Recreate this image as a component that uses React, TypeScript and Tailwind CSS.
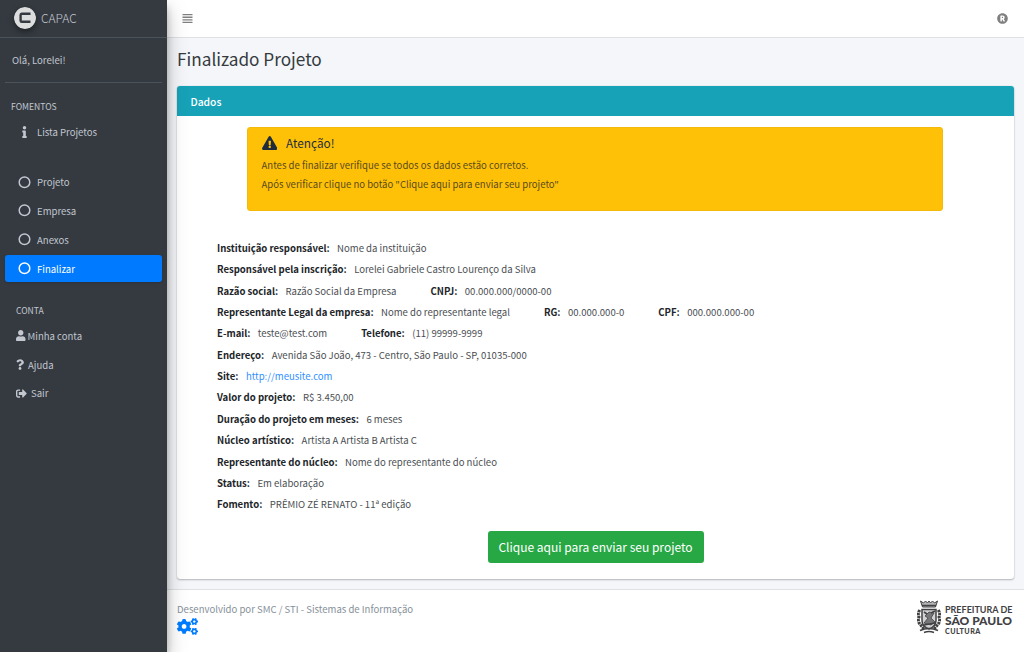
import type { ReactNode } from "react";
import {
  FaCogs,
  FaExclamationTriangle,
  FaInfo,
  FaQuestion,
  FaRegistered,
  FaSignOutAlt,
  FaUser,
} from "react-icons/fa";

type Field = { label: string; value: string; link?: boolean };

const rows: Field[][] = [
  [{ label: "Instituição responsável:", value: "Nome da instituição" }],
  [{ label: "Responsável pela inscrição:", value: "Lorelei Gabriele Castro Lourenço da Silva" }],
  [
    { label: "Razão social:", value: "Razão Social da Empresa" },
    { label: "CNPJ:", value: "00.000.000/0000-00" },
  ],
  [
    { label: "Representante Legal da empresa:", value: "Nome do representante legal" },
    { label: "RG:", value: "00.000.000-0" },
    { label: "CPF:", value: "000.000.000-00" },
  ],
  [
    { label: "E-mail:", value: "teste@test.com" },
    { label: "Telefone:", value: "(11) 99999-9999" },
  ],
  [{ label: "Endereço:", value: "Avenida São João, 473 - Centro, São Paulo - SP, 01035-000" }],
  [{ label: "Site:", value: "http://meusite.com", link: true }],
  [{ label: "Valor do projeto:", value: "R$ 3.450,00" }],
  [{ label: "Duração do projeto em meses:", value: "6 meses" }],
  [{ label: "Núcleo artístico:", value: "Artista A Artista B Artista C" }],
  [{ label: "Representante do núcleo:", value: "Nome do representante do núcleo" }],
  [{ label: "Status:", value: "Em elaboração" }],
  [{ label: "Fomento:", value: "PRÊMIO ZÉ RENATO - 11ª edição" }],
];

function MenuItem({ label, active = false }: { label: string; active?: boolean }) {
  return (
    <a
      className={
        active
          ? "flex h-[26.8px] items-center rounded-[3px] bg-[#007bff] pl-[13px] text-white shadow"
          : "flex h-[26.8px] items-center pl-[13px]"
      }
    >
      <svg viewBox="0 0 13 13" className="mr-[6px] size-[13px]" fill="none" stroke="currentColor">
        <circle cx="6.5" cy="6.200" r="5.300" strokeWidth="1.500" />
      </svg>
      <span>{label}</span>
    </a>
  );
}

function AccountItem({ icon, label }: { icon: ReactNode; label: string }) {
  return (
    <a className="flex h-[26.8px] items-center pl-[11px]">
      {icon}
      <span>{label}</span>
    </a>
  );
}

function Sidebar() {
  return (
    <aside className="z-10 flex w-[167px] shrink-0 flex-col bg-[#343a40] text-[#c2c7d0] shadow-[0_9px_19px_rgba(0,0,0,0.25),0_7px_7px_rgba(0,0,0,0.22)]">
      <div className="flex h-[38px] items-center border-b border-[#4b545c] pl-[14px]">
        <svg viewBox="0 0 22 22" className="mb-[2px] size-[22px] rounded-full shadow-[0_3px_6px_rgba(0,0,0,0.4)]">
          <circle cx="11" cy="11" r="11" fill="#dcdddd" />
          <path d="M16.500 6.700H7.800Q6.600 6.700 6.600 8v5.500q0 1.300 1.200 1.300h8.700" fill="none" stroke="#343a40" strokeWidth="2.400" />
        </svg>
        <span className="mb-[1px] ml-[5px] text-[12px] font-light">CAPAC</span>
      </div>
      <div className="mx-[5px] flex h-[45px] items-center border-b border-[#4b545c] pb-[1px] pl-[7px]">Olá, Lorelei!</div>
      <div className="mt-[14px] flex h-[18px] items-center pl-[11px] text-[8.600px]">FOMENTOS</div>
      <nav className="flex flex-col px-[5px]">
        <a className="mt-[3px] flex h-[26.8px] items-center pt-[1px] pl-[13px]">
          <FaInfo className="mr-[6px] h-[12px] w-[13px]" />
          <span>Lista Projetos</span>
        </a>
        <div className="mt-[24px] flex flex-col gap-[2px]">
          <MenuItem label="Projeto" />
          <MenuItem label="Empresa" />
          <MenuItem label="Anexos" />
          <MenuItem label="Finalizar" active />
        </div>
        <div className="mt-[19px] mb-[3.400px] flex h-[18px] items-center pl-[11px] text-[8.600px]">CONTA</div>
        <div className="flex flex-col gap-[2px]">
          <AccountItem icon={<FaUser className="mr-[2px] h-[11px] w-[9.500px]" />} label="Minha conta" />
          <AccountItem icon={<FaQuestion className="mr-[4px] h-[11px] w-[8px]" />} label="Ajuda" />
          <AccountItem icon={<FaSignOutAlt className="mr-[4px] size-[11px]" />} label="Sair" />
        </div>
      </nav>
    </aside>
  );
}

function CityLogo() {
  return (
    <div className="flex items-start">
      <svg viewBox="0 0 24 34" className="h-[34px] w-[24px]" fill="none" stroke="#414042">
        <path d="M3.500 1l2 6h13l2-6-3 2-2-2-2 2-1.500-2-1.500 2-2-2-2 2z" fill="#b5b5b7" strokeWidth="1" />
        <path d="M5 5.500h14" strokeWidth="1.500" />
        <path d="M5 9.500h14v11q0 6-7 8.500-7-2.500-7-8.500z" fill="#d2d2d4" strokeWidth="1.500" />
        <path d="M2.800 10q-2.500 3.500-.8 7-1.500 4 .8 7l4.200 5M21.200 10q2.500 3.500.8 7 1.500 4-.8 7L17 29" strokeWidth="3" strokeDasharray="2.400 .7" />
        <path d="M7 23l4-5-3-2 4-4 5 1-3 5 4 4-4 3z" fill="#77777a" strokeWidth=".8" />
        <path d="M14 13l4-2M7 12l3 2M7 25l11-2M3 30.500q9-4 18 0M7 32.500q5-2 10 0" strokeWidth="1.600" />
      </svg>
      <div className="mt-[5px] ml-[4px] flex w-[69px] flex-col font-['Lato',sans-serif] text-[#414042]">
        <span className="h-[10px] text-[9px] leading-[10px] font-bold whitespace-nowrap">PREFEITURA DE</span>
        <span className="h-[12px] text-[12px] leading-[12px] font-black whitespace-nowrap">SÃO PAULO</span>
        <span className="h-[9px] text-[7.200px] leading-[9px] font-black tracking-[0.450px]">CULTURA</span>
      </div>
    </div>
  );
}

export default function App() {
  return (
    <div className="flex h-[652px] w-[1024px] overflow-hidden bg-[#f4f6f9] font-['Noto_Sans_CJK_SC','Noto_Sans_CJK_JP',sans-serif] text-[9.570px] leading-[16px] text-[#212529]">
      <Sidebar />
      <div className="flex min-w-0 flex-1 flex-col">
        <header className="flex h-[38px] shrink-0 items-center justify-between border-b border-[#dee2e6] bg-white pr-[16px] pl-[15px] text-[#808080]">
          <svg viewBox="0 0 11 11" className="size-[11px]" fill="currentColor">
            <path d="M.5 1h10v1.300H.5zM.5 3.600h10v1.300H.5zM.5 6.200h10v1.300H.5zM.5 8.800h10v1.300H.5z" />
          </svg>
          <FaRegistered className="size-[11px]" />
        </header>
        <main className="flex flex-1 flex-col px-[10px]">
          <h1 className="mt-[7px] flex h-[28px] items-center text-[17.200px] font-normal text-[#343a40]">Finalizado Projeto</h1>
          <section className="mt-[13px] flex h-[493px] flex-col overflow-hidden rounded-[3px] bg-white shadow-[0_0_1px_rgba(0,0,0,0.2),0_1px_2px_rgba(0,0,0,0.25)]">
            <h2 className="flex h-[30px] shrink-0 items-center bg-[#17a2b8] pt-[1px] pl-[13.500px] text-[10.300px] font-medium text-white">Dados</h2>
            <div className="mr-[71px] ml-[70px] mt-[11px] h-[84px] shrink-0 rounded-[3px] border border-[#f5b90a] bg-[#ffc107] pt-[6px] pl-[13.500px] text-[#1f2d3d]">
              <h5 className="flex h-[17px] items-center text-[11.800px]">
                <FaExclamationTriangle className="mr-[9px] h-[14px] w-[15.500px]" />
                Atenção!
              </h5>
              <p className="mt-[6px] h-[18.600px] text-[#5a4a1c]">Antes de finalizar verifique se todos os dados estão corretos.</p>
              <p className="h-[19px] text-[#5a4a1c]">Após verificar clique no botão "Clique aqui para enviar seu projeto"</p>
            </div>
            <dl className="mt-[26.300px] flex flex-col pl-[40px]">
              {rows.map((fields) => (
                <div key={fields[0].label} className="flex h-[21.370px] items-center">
                  {fields.map((f) => (
                    <div key={f.label} className="mr-[34px] flex gap-[7.500px] whitespace-nowrap">
                      <dt className="font-bold">{f.label}</dt>
                      <dd className={f.link ? "text-[#2f8fff]" : "text-[#4a4e52]"}>{f.value}</dd>
                    </div>
                  ))}
                </div>
              ))}
            </dl>
            <button className="mt-[15.900px] flex h-[32px] w-[216px] shrink-0 items-center justify-center self-center rounded-[3px] bg-[#28a745] text-[12px] text-white">
              Clique aqui para enviar seu projeto
            </button>
          </section>
        </main>
        <footer className="flex h-[63px] shrink-0 justify-between border-t border-[#dee2e6] bg-white pr-[10px] pl-[10px]">
          <div className="pt-[11px] text-[#869099]">
            <p>Desenvolvido por SMC / STI - Sistemas de Informação</p>
            <FaCogs className="mt-[1px] h-[17px] w-[21px] text-[#007bff]" />
          </div>
          <div className="pt-[10px]">
            <CityLogo />
          </div>
        </footer>
      </div>
    </div>
  );
}
